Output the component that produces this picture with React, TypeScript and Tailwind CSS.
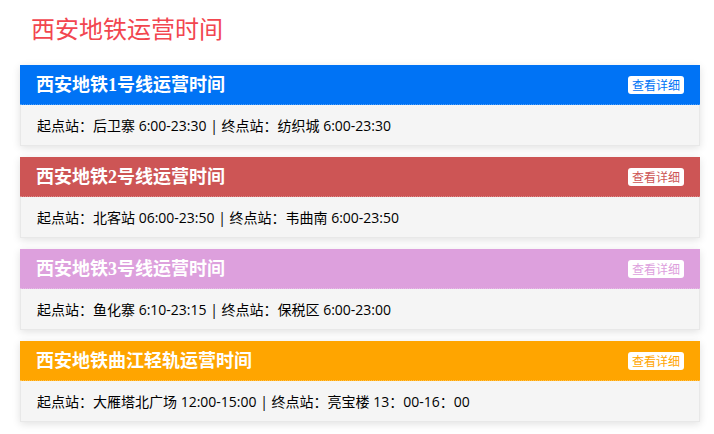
import React from "react";

type Line = {
    name: string;
    color: string;
    start: string;
    end: string;
};

const lines: Line[] = [
    { name: "西安地铁1号线运营时间", color: "#0073f5", start: "后卫寨 6:00-23:30", end: "纺织城 6:00-23:30" },
    { name: "西安地铁2号线运营时间", color: "#cd5555", start: "北客站 06:00-23:50", end: "韦曲南 6:00-23:50" },
    { name: "西安地铁3号线运营时间", color: "#dda0dd", start: "鱼化寨 6:10-23:15", end: "保税区 6:00-23:00" },
    { name: "西安地铁曲江轻轨运营时间", color: "#ffa500", start: "大雁塔北广场 12:00-15:00", end: "亮宝楼 13：00-16：00" },
];

const LineCard = ({ line }: { line: Line }) => {
    return (
        <div className="shadow-[0_2px_8px_rgba(0,0,0,0.12)]">
            <div
                className="h-10 flex items-center justify-between pl-4 pr-4 border-b border-dotted border-white/30"
                style={{ backgroundColor: line.color }}
            >
                <p className="text-white font-bold text-[18px] leading-6 font-['Liberation_Serif','Noto_Sans_CJK_SC',serif]">
                    {line.name}
                </p>
                <button
                    className="bg-white rounded-[3px] px-1 h-[18px] leading-[18px] text-[12px] font-['Noto_Sans_CJK_SC',sans-serif]"
                    style={{ color: line.color }}
                >
                    查看详细
                </button>
            </div>
            <div className="h-[41px] bg-[#f5f5f5] border-x border-b border-[#e8e8e8] flex items-center pl-4 text-[14px] text-black font-['Open_Sans','Noto_Sans_CJK_SC',sans-serif]">
                起点站：{line.start} | 终点站：{line.end}
            </div>
        </div>
    );
};

export default function App() {
    return (
        <div className="bg-white w-[714px] h-[434px] overflow-hidden font-['Noto_Sans_CJK_SC',sans-serif]">
            <h1 className="text-[24px] leading-[30px] text-[#f2464f] pl-[31px] pt-[13px] h-[65px]">西安地铁运营时间</h1>
            <div className="flex flex-col gap-[11px] ml-5 w-[680px]">
                {lines.map((line, index) => <LineCard key={index} line={line} />)}
            </div>
        </div>
    );
}
